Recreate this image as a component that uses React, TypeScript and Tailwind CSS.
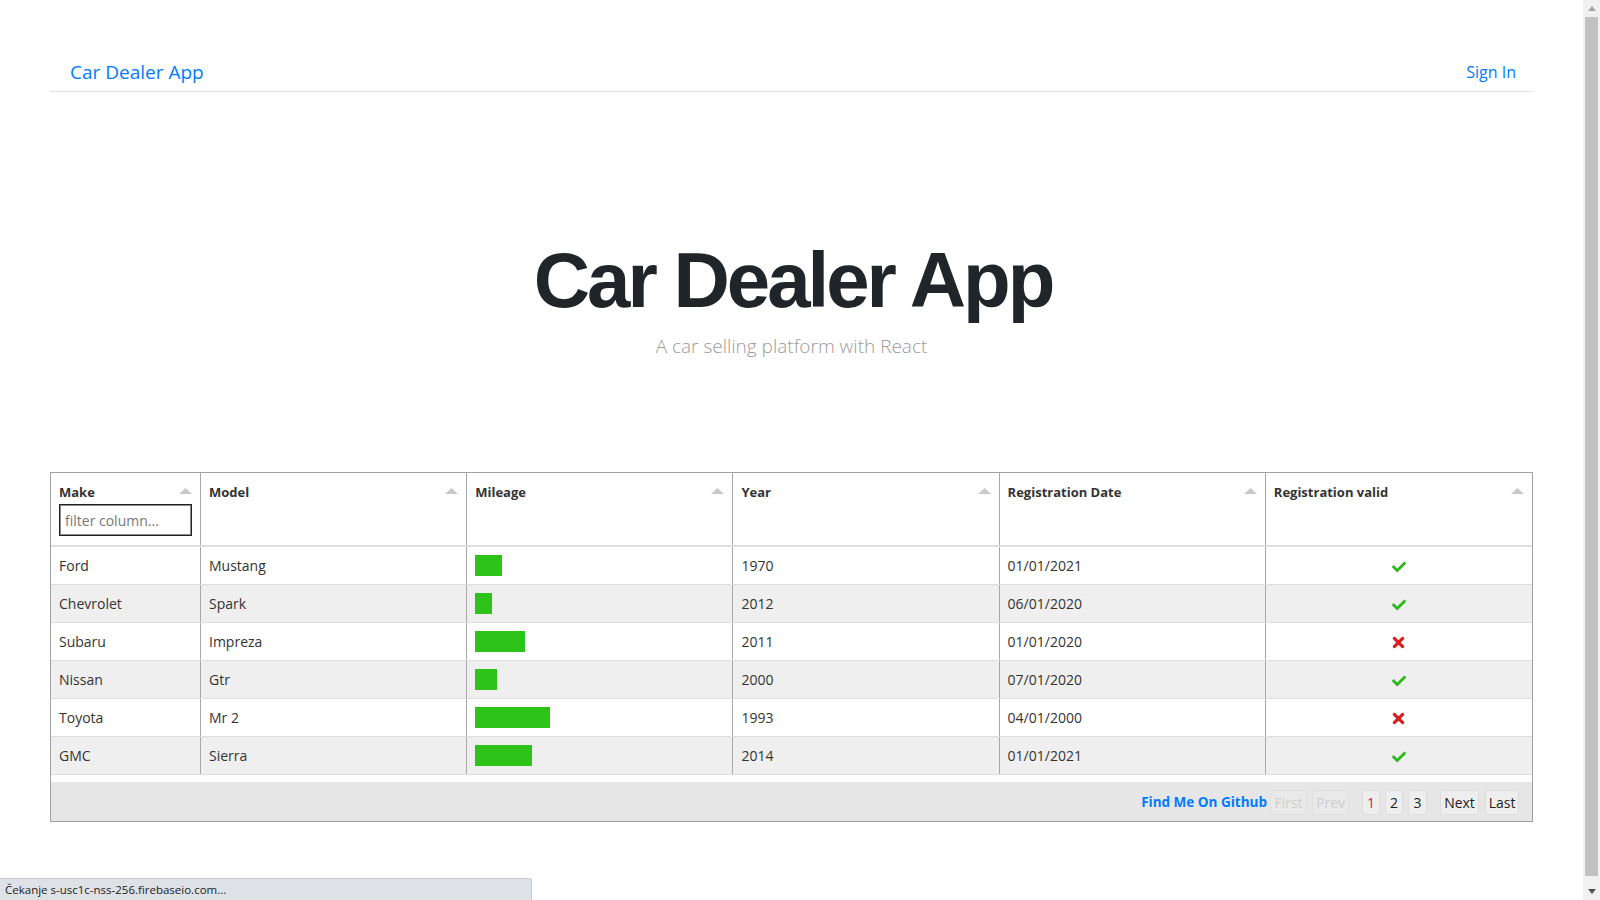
import React from "react";
import { FaCheck, FaTimes } from "react-icons/fa";

type Car = {
  make: string;
  model: string;
  bar: number;
  year: string;
  date: string;
  valid: boolean;
};

const cars: Car[] = [
  { make: "Ford", model: "Mustang", bar: 27, year: "1970", date: "01/01/2021", valid: true },
  { make: "Chevrolet", model: "Spark", bar: 17, year: "2012", date: "06/01/2020", valid: true },
  { make: "Subaru", model: "Impreza", bar: 50, year: "2011", date: "01/01/2020", valid: false },
  { make: "Nissan", model: "Gtr", bar: 22, year: "2000", date: "07/01/2020", valid: true },
  { make: "Toyota", model: "Mr 2", bar: 75, year: "1993", date: "04/01/2000", valid: false },
  { make: "GMC", model: "Sierra", bar: 57, year: "2014", date: "01/01/2021", valid: true },
];

function SortArrow() {
  return (
    <svg width="13" height="7" viewBox="0 0 13 7" className="mt-[6px] shrink-0">
      <polygon points="6.5,0 13,6 0,6" fill="#c9c9c9" />
    </svg>
  );
}

function HeaderCell({ title, last, children }: { title: string; last?: boolean; children?: React.ReactNode }) {
  return (
    <div className={`px-[8px] pt-[9px] pb-[9px] ${last ? "" : "border-r border-[#a8a8a8]"}`}>
      <div className="flex items-start justify-between">
        <span className="font-bold text-[13px] leading-[20px] text-[#333]">{title}</span>
        <SortArrow />
      </div>
      {children}
    </div>
  );
}

export default function App() {
  const sans = "font-['Open_Sans','Noto_Sans',sans-serif]";
  return (
    <div className={`flex h-[900px] w-full overflow-hidden bg-white ${sans}`}>
      <div className="relative flex-1 min-w-0">
        <div className="px-[50px]">
          {/* Navbar */}
          <div className="pt-[53px]">
            <nav className="flex h-[39px] items-start justify-between border-b border-[#dee2e6] pl-[20px] pr-[17px]">
              <span className="text-[19px] leading-[38px] text-[#007bff]">Car Dealer App</span>
              <span className="text-[16px] leading-[38px] text-[#007bff]">Sign In</span>
            </nav>
          </div>

          {/* Hero */}
          <div className="text-center">
            <h1 className="mt-[149px] pl-[3px] font-['Liberation_Sans',Arial,sans-serif] text-[78px] font-bold leading-[78px] tracking-[-3px] text-[#212529]">
              Car Dealer App
            </h1>
            <p className="mt-[12px] text-[19px] font-light leading-[30px] text-[#9b9b9b]">
              A car selling platform with React
            </p>
          </div>

          {/* Table */}
          <div className="mt-[111px] border border-[#a0a0a0] text-[14px] text-[#333]">
            <div className="grid grid-cols-[150px_repeat(5,minmax(0,1fr))] border-b-2 border-[#dddddd]">
              <HeaderCell title="Make">
                <input
                  placeholder="filter column..."
                  className="mt-[2px] h-[32px] w-[133px] border border-[#222] px-[5px] text-[14px] text-[#333] shadow-[inset_0_0_0_1px_#8a8a8a] outline-none placeholder:text-[#777]"
                />
              </HeaderCell>
              <HeaderCell title="Model" />
              <HeaderCell title="Mileage" />
              <HeaderCell title="Year" />
              <HeaderCell title="Registration Date" />
              <HeaderCell title="Registration valid" last />
            </div>
            {cars.map((c, i) => (
              <div
                key={c.make}
                className={`grid h-[38px] grid-cols-[150px_repeat(5,minmax(0,1fr))] border-b border-[#dddddd] ${
                  i % 2 === 1 ? "bg-[#efefef]" : "bg-white"
                }`}
              >
                <div className="flex items-center border-r border-[#a8a8a8] px-[8px]">{c.make}</div>
                <div className="flex items-center border-r border-[#a8a8a8] px-[8px]">{c.model}</div>
                <div className="flex items-center border-r border-[#a8a8a8] px-[8px]">
                  <div className="h-[21px] bg-[#2ec318]" style={{ width: `${c.bar}px` }} />
                </div>
                <div className="flex items-center border-r border-[#a8a8a8] px-[8px]">{c.year}</div>
                <div className="flex items-center border-r border-[#a8a8a8] px-[8px]">{c.date}</div>
                <div className="flex items-center justify-center pt-[2px]">
                  {c.valid ? (
                    <FaCheck size={14} color="#2bb81c" />
                  ) : (
                    <FaTimes size={17} color="#d91d1d" />
                  )}
                </div>
              </div>
            ))}
            <div className="h-[7px] bg-white" />
            <div className="flex h-[39px] items-start justify-end bg-[#e6e6e6] pr-[13px] pt-[8px] text-[14px]">
              <span className="mr-[3px] text-[13.5px] font-bold leading-[25px] text-[#007bff]">Find Me On Github</span>
              <div className="flex gap-[5px]">
                <span className="h-[25px] w-[37px] rounded-[3px] border border-[#e0e0e0] bg-[#e9e9e9] text-center leading-[23px] text-[#cfcfcf]">First</span>
                <span className="h-[25px] w-[37px] rounded-[3px] border border-[#e0e0e0] bg-[#e9e9e9] text-center leading-[23px] text-[#cfcfcf]">Prev</span>
              </div>
              <div className="ml-[13px] flex gap-[5px]">
                <span className="h-[25px] w-[18px] rounded-[3px] border border-[#dedede] bg-[#eeeeee] text-center leading-[23px] text-[#cc1f45]">1</span>
                <span className="h-[25px] w-[18px] rounded-[3px] border border-[#dedede] bg-[#eeeeee] text-center leading-[23px] text-[#222]">2</span>
                <span className="h-[25px] w-[19px] rounded-[3px] border border-[#dedede] bg-[#eeeeee] text-center leading-[23px] text-[#222]">3</span>
              </div>
              <div className="ml-[13px] flex gap-[6px]">
                <span className="h-[25px] w-[39px] rounded-[3px] border border-[#dedede] bg-[#eeeeee] text-center leading-[23px] text-[#222]">Next</span>
                <span className="h-[25px] w-[34px] rounded-[3px] border border-[#dedede] bg-[#eeeeee] text-center leading-[23px] text-[#222]">Last</span>
              </div>
            </div>
          </div>
        </div>

        {/* Browser status bubble */}
        <div className="absolute bottom-0 left-0 h-[22px] w-[532px] rounded-tr-[3px] border-t border-r border-[#c9ccd1] bg-[#dee1e6] pl-[5px] text-[11.5px] leading-[21px] text-[#202124]">
          Čekanje s-usc1c-nss-256.firebaseio.com...
        </div>
      </div>

      {/* Scrollbar */}
      <div className="flex w-[17px] shrink-0 flex-col bg-[#f1f1f1]">
        <div className="flex h-[17px] items-center justify-center">
          <svg width="8" height="5" viewBox="0 0 8 5">
            <polygon points="4,0 8,5 0,5" fill="#a3a3a3" />
          </svg>
        </div>
        <div className="mx-[2px] mb-[7px] flex-1 bg-[#c1c1c1]" />
        <div className="flex h-[17px] items-center justify-center">
          <svg width="8" height="5" viewBox="0 0 8 5">
            <polygon points="0,0 8,0 4,5" fill="#505050" />
          </svg>
        </div>
      </div>
    </div>
  );
}
